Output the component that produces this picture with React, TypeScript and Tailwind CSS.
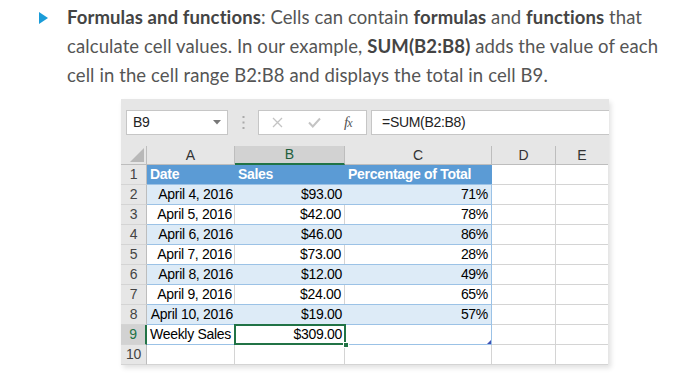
import React from "react";

const COLS = [
  { key: "A", w: 88 },
  { key: "B", w: 110 },
  { key: "C", w: 147 },
  { key: "D", w: 64 },
  { key: "E", w: 52 },
];

type Row = { a: string; b: string; c: string };

const DATA: Row[] = [
  { a: "April 4, 2016", b: "$93.00", c: "71%" },
  { a: "April 5, 2016", b: "$42.00", c: "78%" },
  { a: "April 6, 2016", b: "$46.00", c: "86%" },
  { a: "April 7, 2016", b: "$73.00", c: "28%" },
  { a: "April 8, 2016", b: "$12.00", c: "49%" },
  { a: "April 9, 2016", b: "$24.00", c: "65%" },
  { a: "April 10, 2016", b: "$19.00", c: "57%" },
];

const cellFont = { fontFamily: "'Liberation Sans', Arial, sans-serif" };

function RowHeader({ n, selected }: { n: number; selected?: boolean }) {
  return (
    <div
      className={`w-[26px] h-[20px] flex items-center justify-center text-[14px] tracking-[-0.3px] border-b border-[#d4d4d4] ${
        selected
          ? "bg-[#d2d2d2] text-[#217346] border-r-2 border-r-[#217346]"
          : "bg-[#e6e6e6] text-[#444] border-r border-r-[#bdbdbd]"
      }`}
    >
      {n}
    </div>
  );
}

function EmptyDE() {
  return (
    <>
      <div className="w-[64px] h-[20px] bg-white border-r border-b border-[#d4d4d4]" />
      <div className="w-[52px] h-[20px] bg-white border-b border-[#d4d4d4]" />
    </>
  );
}

export default function App() {
  return (
    <div className="w-[687px] h-[392px] bg-white relative overflow-hidden">
      {/* Paragraph */}
      <div className="flex pt-[3px]">
        <div className="w-[67px] flex justify-end pr-[19px] pt-[9px]">
          <svg width="9" height="12" viewBox="0 0 9 12">
            <polygon points="0,0 9,6 0,12" fill="#1a9cd8" />
          </svg>
        </div>
        <p
          className="text-[18.5px] leading-[29px] text-[#555555] tracking-[0.1px] whitespace-nowrap"
          style={{ fontFamily: "Lato, 'Open Sans', sans-serif" }}
        >
          <b className="text-[#444]">Formulas and functions</b>: Cells can contain{" "}
          <b className="text-[#444]">formulas</b> and <b className="text-[#444]">functions</b> that
          <br />
          calculate cell values. In our example, <b className="text-[#444]">SUM(B2:B8)</b> adds the
          value of each
          <br />
          cell in the cell range B2:B8 and displays the total in cell B9.
        </p>
      </div>

      {/* Spreadsheet */}
      <div
        className="absolute left-[121px] top-[99px] w-[488px] bg-[#e6e6e6] shadow-[2px_3px_5px_rgba(0,0,0,0.12)]"
        style={cellFont}
      >
        {/* Formula bar */}
        <div className="flex items-center h-[25px] mt-[11px] mb-[11px]">
          <div className="ml-[5px] w-[102px] h-[25px] bg-white border border-[#c6c6c6] flex items-center justify-between pl-[6px] pr-[6px] text-[14px] tracking-[-0.3px] text-[#222]">
            <span>B9</span>
            <svg width="8" height="5" viewBox="0 0 8 5">
              <polygon points="0,0 8,0 4,4.5" fill="#777" />
            </svg>
          </div>
          <div className="w-[30px] flex justify-center">
            <svg width="3" height="13" viewBox="0 0 3 13">
              <rect x="0.5" y="0" width="2" height="2" fill="#aaa" />
              <rect x="0.5" y="5.5" width="2" height="2" fill="#aaa" />
              <rect x="0.5" y="11" width="2" height="2" fill="#aaa" />
            </svg>
          </div>
          <div className="w-[109px] h-[25px] bg-white border border-[#c6c6c6] flex items-center pl-[13px]">
            <svg width="11" height="11" viewBox="0 0 11 11">
              <path d="M1 1 L10 10 M10 1 L1 10" stroke="#c4c4c4" strokeWidth="1.3" />
            </svg>
            <svg className="ml-[25px]" width="13" height="11" viewBox="0 0 13 11">
              <path d="M1 5.5 L4.8 9.5 L12 1.5" stroke="#c4c4c4" strokeWidth="2" fill="none" />
            </svg>
            <span
              className="ml-[23px] text-[15px] italic text-[#555] tracking-[-1px] leading-none"
              style={{ fontFamily: "'Liberation Serif', serif" }}
            >
              f<span className="text-[12px]">x</span>
            </span>
          </div>
          <div className="ml-[4px] flex-1 h-[25px] bg-white border border-[#c6c6c6] border-r-0 flex items-center pl-[10px] text-[14px] tracking-[-0.3px] text-[#222]">
            =SUM(B2:B8)
          </div>
        </div>

        {/* Column headers */}
        <div className="flex h-[19px]">
          <div className="w-[26px] h-[19px] bg-[#e6e6e6] border-r border-b border-[#bdbdbd] relative">
            <svg className="absolute right-[2px] bottom-[2px]" width="14" height="14" viewBox="0 0 14 14">
              <polygon points="14,0 14,14 0,14" fill="#b8b8b8" />
            </svg>
          </div>
          {COLS.map((c) =>
            c.key === "B" ? (
              <div
                key={c.key}
                style={{ width: c.w }}
                className="h-[19px] bg-[#d2d2d2] border-r border-[#bdbdbd] border-b-2 border-b-[#217346] flex items-center justify-center text-[14px] text-[#1e5e3c]"
              >
                {c.key}
              </div>
            ) : (
              <div
                key={c.key}
                style={{ width: c.w }}
                className={`h-[19px] bg-[#e6e6e6] border-b border-[#bdbdbd] flex items-center justify-center text-[14px] text-[#333] ${
                  c.key === "E" ? "" : "border-r"
                }`}
              >
                {c.key}
              </div>
            )
          )}
        </div>

        {/* Row 1 header */}
        <div className="flex">
          <RowHeader n={1} />
          <div className="w-[345px] h-[20px] bg-[#5b9bd5] flex text-[14px] tracking-[-0.3px] font-bold text-white border-b border-[#9bc2e6]">
            <div className="w-[88px] pl-[3px] flex items-center">Date</div>
            <div className="w-[110px] pl-[3px] flex items-center">Sales</div>
            <div className="w-[147px] pl-[3px] flex items-center">Percentage of Total</div>
          </div>
          <EmptyDE />
        </div>

        {/* Data rows */}
        {DATA.map((r, i) => {
          const band = i % 2 === 0;
          return (
            <div key={i} className="flex">
              <RowHeader n={i + 2} />
              <div
                className={`w-[345px] h-[20px] flex text-[14px] tracking-[-0.3px] text-[#000] border-b border-r border-[#9bc2e6] ${
                  band ? "bg-[#ddebf7]" : "bg-white"
                }`}
              >
                <div
                  className={`w-[88px] pr-[2px] flex items-center justify-end ${
                    band ? "" : "border-r border-[#d4d4d4]"
                  }`}
                >
                  {r.a}
                </div>
                <div
                  className={`w-[110px] pr-[3px] flex items-center justify-end ${
                    band ? "" : "border-r border-[#d4d4d4]"
                  }`}
                >
                  {r.b}
                </div>
                <div className="w-[146px] pr-[3px] flex items-center justify-end">{r.c}</div>
              </div>
              <EmptyDE />
            </div>
          );
        })}

        {/* Row 9 */}
        <div className="flex">
          <RowHeader n={9} selected />
          <div className="w-[345px] h-[20px] flex text-[14px] tracking-[-0.3px] text-[#000] bg-white border-b border-r border-[#9bc2e6] relative">
            <div className="w-[88px] pl-[3px] flex items-center">Weekly Sales</div>
            <div className="w-[110px] flex items-center justify-end pr-[3px] relative">
              <div className="absolute left-[-1px] top-[-1px] w-[112px] h-[21px] border-2 border-[#217346]" />
              <div className="absolute right-[-4px] bottom-[-4px] w-[6px] h-[6px] bg-[#217346] border border-white" />
              <span className="relative">$309.00</span>
            </div>
            <div className="w-[146px] relative">
              <svg className="absolute right-[0px] bottom-[0px]" width="4" height="4" viewBox="0 0 4 4">
                <polygon points="4,0 4,4 0,4" fill="#3f51b5" />
              </svg>
            </div>
          </div>
          <EmptyDE />
        </div>

        {/* Row 10 */}
        <div className="flex">
          <RowHeader n={10} />
          <div className="w-[88px] h-[20px] bg-white border-r border-b border-[#d4d4d4]" />
          <div className="w-[110px] h-[20px] bg-white border-r border-b border-[#d4d4d4]" />
          <div className="w-[147px] h-[20px] bg-white border-r border-b border-[#d4d4d4]" />
          <EmptyDE />
        </div>
      </div>
    </div>
  );
}
